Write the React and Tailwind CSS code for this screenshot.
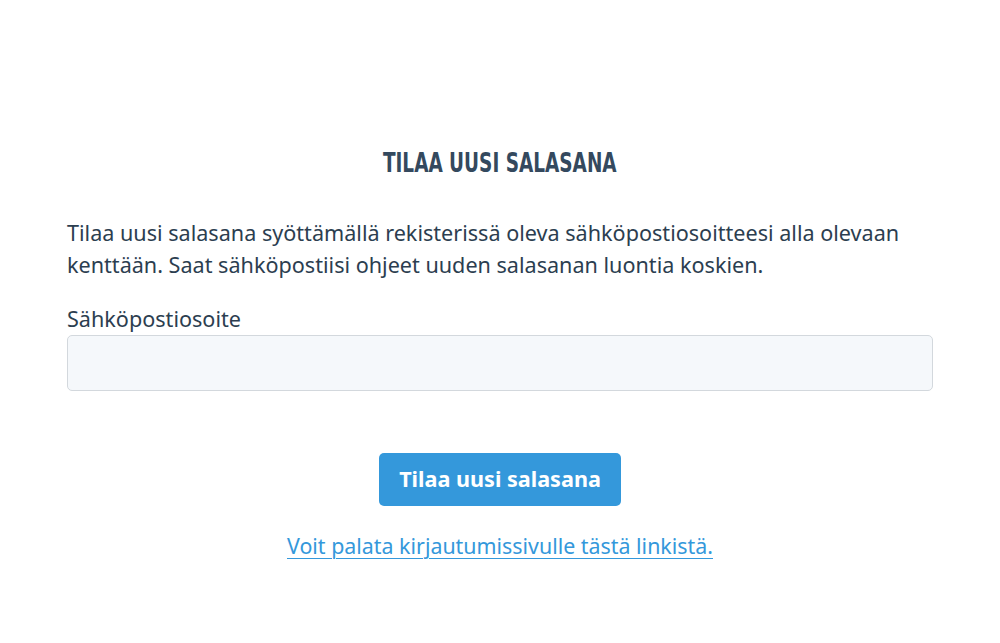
export default function App() {
  return (
    <div className="min-h-[643px] bg-white flex justify-center text-[#2c3e50]" style={{ fontFamily: '"Noto Sans", "Open Sans", sans-serif' }}>
      <div className="w-[866px] pt-[146px]">
        <h1
          className="text-center text-[27px] leading-[34px] font-bold uppercase text-[#34495e]"
          style={{ fontFamily: '"DejaVu Sans Condensed", "DejaVu Sans", sans-serif' }}
        >
          <span className="inline-block scale-x-[0.76] origin-center">Tilaa uusi salasana</span>
        </h1>
        <p className="mt-[37px] text-[21.6px] leading-[32px]">
          Tilaa uusi salasana syöttämällä rekisterissä oleva sähköpostiosoitteesi alla olevaan kenttään. Saat sähköpostiisi ohjeet uuden salasanan luontia koskien.
        </p>
        <label className="block mt-[22px] text-[21.6px] leading-[32px]">Sähköpostiosoite</label>
        <input
          type="email"
          className="block w-full h-[56px] mt-0 rounded-[5px] border border-[#d3d8dd] bg-[#f5f8fb] px-3 outline-none"
        />
        <div className="flex justify-center mt-[62px]">
          <button className="w-[242px] h-[53px] rounded-[5px] bg-[#3498db] text-white text-[21.6px] font-bold">
            Tilaa uusi salasana
          </button>
        </div>
        <div className="text-center mt-[24px]">
          <a href="#" className="text-[21.4px] leading-[32px] text-[#3498db] underline underline-offset-[4px] decoration-1">
            Voit palata kirjautumissivulle tästä linkistä.
          </a>
        </div>
      </div>
    </div>
  );
}
